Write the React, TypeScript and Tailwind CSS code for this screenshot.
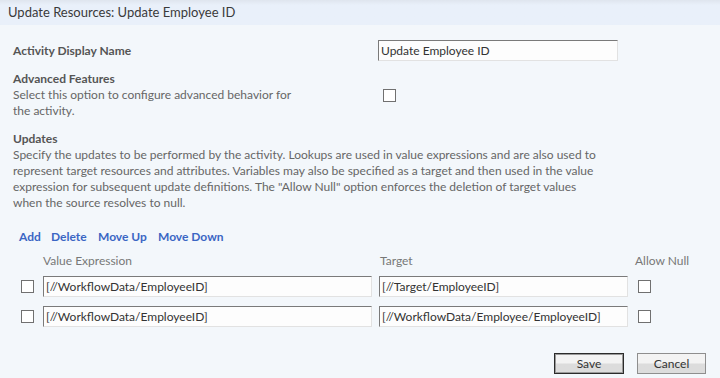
import React from "react";

const F = "font-['Lato','Noto_Sans',sans-serif]";

function Box({ className = "" }: { className?: string }) {
  return (
    <div
      className={`w-[13px] h-[13px] shrink-0 border border-[#707070] bg-white ${className}`}
    />
  );
}

function Field({ value, w }: { value: string; w: string }) {
  return (
    <div
      className={`${w} h-[21px] shrink-0 bg-[#fdfdfd] border border-t-[#7a7a7a] border-l-[#7a7a7a] border-r-[#e2e2e2] border-b-[#e2e2e2] pl-[2px] flex items-center text-[12px] text-[#333] whitespace-nowrap overflow-hidden`}
    >
      {value}
    </div>
  );
}

export default function App() {
  return (
    <div className={`w-[720px] h-[378px] overflow-hidden bg-[#f3f7fb] ${F}`}>
      <div className="h-[25px] bg-gradient-to-b from-[#dfe5ee] to-[#e9f0fa] to-[20%] pl-[8px] flex items-center text-[13px] text-[#3a3a3a]">
        Update Resources: Update Employee ID
      </div>

      <div className="pl-[13px]">
        {/* Activity Display Name */}
        <div className="mt-[15px] flex items-center h-[21px]">
          <div className="w-[365px] text-[12px] font-bold text-[#555]">Activity Display Name</div>
          <Field value="Update Employee ID" w="w-[240px]" />
        </div>

        {/* Advanced Features */}
        <div className="mt-[10px] flex text-[12px] leading-[16px]">
          <div className="w-[365px]">
            <div className="font-bold text-[#555]">Advanced Features</div>
            <div className="text-[#666] whitespace-nowrap">
              Select this option to configure advanced behavior for
              <br />
              the activity.
            </div>
          </div>
          <div className="pt-[18px] pl-[5px]">
            <Box />
          </div>
        </div>

        {/* Updates */}
        <div className="mt-[12px] text-[12px] leading-[16px]">
          <div className="font-bold text-[#555]">Updates</div>
          <div className="text-[#666] whitespace-nowrap">
            Specify the updates to be performed by the activity. Lookups are used in value expressions and are also used to
            <br />
            represent target resources and attributes. Variables may also be specified as a target and then used in the value
            <br />
            expression for subsequent update definitions. The "Allow Null" option enforces the deletion of target values
            <br />
            when the source resolves to null.
          </div>
        </div>

        {/* Links */}
        <div className="mt-[18px] pl-[6px] flex text-[12px] leading-[16px] font-bold text-[#3b66c4]">
          <span className="w-[32px]">Add</span>
          <span className="w-[47px]">Delete</span>
          <span className="w-[60px]">Move Up</span>
          <span>Move Down</span>
        </div>

        {/* Header */}
        <div className="mt-[8px] flex text-[12px] leading-[16px] text-[#777]">
          <span className="pl-[30px] w-[367px]">Value Expression</span>
          <span className="w-[255px]">Target</span>
          <span>Allow Null</span>
        </div>

        {/* Rows */}
        <div className="mt-[7px] flex flex-col gap-[9px]">
          {[
            ["[//WorkflowData/EmployeeID]", "[//Target/EmployeeID]"],
            ["[//WorkflowData/EmployeeID]", "[//WorkflowData/Employee/EmployeeID]"],
          ].map(([a, b], i) => (
            <div key={i} className="flex items-center h-[21px]">
              <Box className="ml-[8px]" />
              <div className="ml-[9px]">
                <Field value={a} w="w-[329px]" />
              </div>
              <div className="ml-[7px]">
                <Field value={b} w="w-[249px]" />
              </div>
              <Box className="ml-[10px]" />
            </div>
          ))}
        </div>
      </div>

      {/* Buttons */}
      <div className="mt-[26px] flex justify-end gap-[13px] pr-[14px]">
        <button className="w-[70px] h-[21px] border border-[#2b2b2b] shadow-[inset_0_0_0_1px_#9a9a9a] bg-gradient-to-b from-[#f3f3f3] from-[45%] to-[#dcdcdc] to-[55%] text-[12px] text-[#333] flex items-center justify-center">
          Save
        </button>
        <button className="w-[69px] h-[21px] border border-[#8e8e8e] bg-gradient-to-b from-[#f3f3f3] from-[45%] to-[#dcdcdc] to-[55%] text-[12px] text-[#333] flex items-center justify-center">
          Cancel
        </button>
      </div>
    </div>
  );
}
